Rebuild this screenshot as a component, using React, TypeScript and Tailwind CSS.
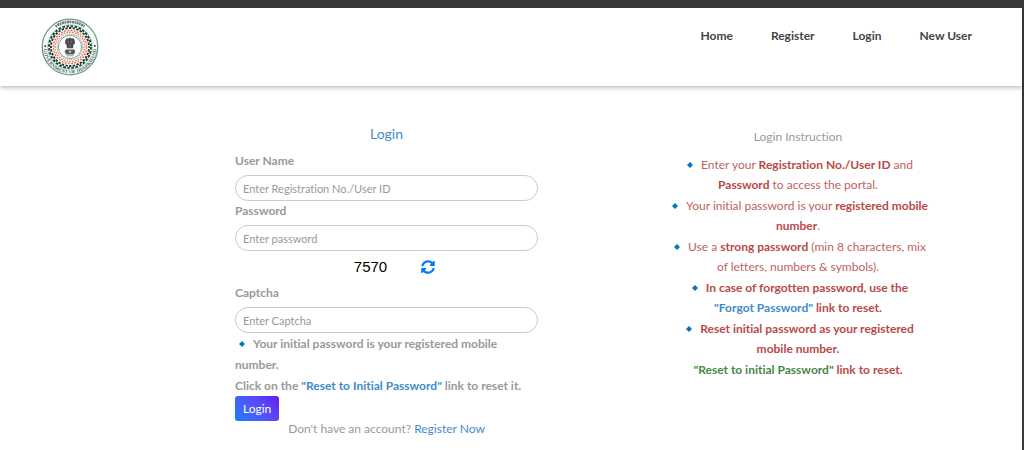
import React, { useState } from 'react';
import { FaSyncAlt } from 'react-icons/fa';

const NAV_LINKS = ['Home', 'Register', 'Login', 'New User'];

const Seal: React.FC = () => (
  <svg viewBox="0 0 58 58" className="w-[58px] h-[58px]" role="img" aria-label="Government of Jharkhand">
    <defs>
      <path id="sealBottom" d="M2.4 29 A26.6 26.6 0 0 0 55.6 29" />
    </defs>
    <circle cx="29" cy="29" r="27.8" fill="#f6faf8" stroke="#6c9a8b" strokeWidth="1.3" />
    <circle cx="29" cy="29" r="22.2" fill="#fff" stroke="#7ba697" strokeWidth="0.7" />
    {/* woven rings */}
    <circle cx="29" cy="29" r="20.9" fill="none" stroke="#1d4435" strokeWidth="1.9" strokeDasharray="2.6 1.5" />
    <circle cx="29" cy="29" r="19" fill="none" stroke="#1d3a2f" strokeWidth="1.9" strokeDasharray="2.4 1.33" strokeDashoffset="1.6" />
    <circle cx="29" cy="29" r="16.6" fill="none" stroke="#e2745c" strokeWidth="1.5" strokeDasharray="2 1.26" />
    <circle cx="29" cy="29" r="14.8" fill="none" stroke="#e58a72" strokeWidth="1.5" strokeDasharray="1.8 1.1" strokeDashoffset="1.2" />
    <circle cx="29" cy="29" r="12.9" fill="none" stroke="#b9a39c" strokeWidth="1.1" strokeDasharray="1.4 0.8" />
    <circle cx="29" cy="29" r="11.6" fill="#fff" stroke="#6c9a8b" strokeWidth="0.9" />
    {/* lion capital */}
    <path d="M24.4 22 L25.8 20.2 L27.4 20.6 L29 19.6 L30.6 20.6 L32.2 20.2 L33.6 22 L34 25.4 L32.6 26.6 L32 30.2 H26 L25.4 26.6 L24 25.4 Z" fill="#4a4a50" />
    <path d="M27.4 22.6 V25 M30.6 22.6 V25 M29 26 V29.6" stroke="#8d8d92" strokeWidth="0.6" />
    <path d="M24.6 31.4 H33.4 L34.2 33.4 L33 36.4 H25 L23.8 33.4 Z" fill="#5a5a60" />
    <circle cx="29" cy="33.8" r="1.2" fill="#b9b9bc" />
    <path d="M25.4 37.8 H32.6" stroke="#8a8a8e" strokeWidth="0.9" />
    <path d="M14.6 8.4 A25.2 25.2 0 0 1 43.4 8.4" fill="none" stroke="#6c7c75" strokeWidth="2.6" strokeDasharray="1.6 0.6 2.2 0.5" />
    <circle cx="4.2" cy="28" r="1" fill="#294c40" />
    <circle cx="53.8" cy="28" r="1" fill="#294c40" />
    <text fill="#4d6a60" className="font-['Liberation_Serif'] text-[5px] font-bold">
      <textPath href="#sealBottom" startOffset="50%" textAnchor="middle">GOVERNMENT OF JHARKHAND</textPath>
    </text>
  </svg>
);

const Bullet: React.FC = () => (
  <svg viewBox="0 0 6 6" className="inline w-[6px] h-[6px] ml-1 mr-2 align-[1px]" aria-hidden="true">
    <path d="M3 0 L6 3 L3 6 L0 3 Z" fill="#0277bd" />
  </svg>
);

interface FieldProps {
  id: string;
  label: string;
  placeholder: string;
  type?: string;
}

const Field: React.FC<FieldProps> = ({ id, label, placeholder, type = 'text' }) => {
  const [value, setValue] = useState('');

  return (
    <div className="flex flex-col">
      <label htmlFor={id} className="mb-1 leading-5 font-bold">{label}</label>
      <input
        id={id}
        type={type}
        value={value}
        placeholder={placeholder}
        onChange={(e) => setValue(e.target.value)}
        className="w-full h-[26px] px-[7px] bg-white border border-[#ccc] rounded-full outline-none text-[11px] text-[#555] placeholder:text-[#999]"
      />
    </div>
  );
};

const App: React.FC = () => {
  const [captcha, setCaptcha] = useState(7570);

  return (
    <div className="min-h-screen bg-white border-t-8 border-r-2 border-[#383838] font-[Lato,sans-serif] text-xs text-[#999] [font-variant-ligatures:none]">
      <header className="flex items-start justify-between pl-[41px] pr-[50px] py-[10px] shadow-[0_2px_4px_rgba(0,0,0,0.25)]">
        <a href="#"><Seal /></a>
        <nav className="flex gap-[38px] pt-2 leading-5 font-bold text-[#444]">
          {NAV_LINKS.map((link) => (
            <a key={link} href="#">{link}</a>
          ))}
        </nav>
      </header>

      <main className="grid grid-cols-[235fr_303fr_130fr_260fr_94fr] pt-[38px]">
        <form className="col-start-2" onSubmit={(e) => e.preventDefault()}>
          <h1 className="mb-[7px] text-center text-sm leading-5 text-[#428bca]">Login</h1>
          <Field id="username" label="User Name" placeholder="Enter Registration No./User ID" />
          <Field id="password" label="Password" placeholder="Enter password" type="password" />
          <div className="flex items-center justify-center gap-[34px] h-8 pl-4">
            <span className="font-['Liberation_Sans',sans-serif] text-[15px] text-black">{captcha}</span>
            <button
              type="button"
              aria-label="Refresh captcha"
              onClick={() => setCaptcha(Math.floor(1000 + Math.random() * 9000))}
              className="text-sm text-[#007bff]"
            >
              <FaSyncAlt />
            </button>
          </div>
          <Field id="captcha" label="Captcha" placeholder="Enter Captcha" />
          <p className="leading-[21px] font-bold">
            <Bullet />Your initial password is your registered mobile<br />number.
          </p>
          <p className="leading-[21px] font-bold">
            Click on the <a href="#" className="text-[#428bca]">"Reset to Initial Password"</a> link to reset it.
          </p>
          <button type="submit" className="block h-[25px] px-2 rounded-[3px] bg-linear-45 from-[#007bff] to-[#6610f2] text-white">
            Login
          </button>
          <p className="text-center leading-4">
            Don't have an account? <a href="#" className="text-[#428bca]">Register Now</a>
          </p>
        </form>

        <section className="col-start-4 text-center">
          <h2 className="pt-[3px] mb-2 leading-5">Login Instruction</h2>
          <ul className="flex flex-col gap-px leading-5 text-[#c0625f] [&_b]:text-[#b94a48]">
            <li><Bullet />Enter your <b>Registration No./User ID</b> and<br /><b>Password</b> to access the portal.</li>
            <li><Bullet />Your initial password is your <b>registered mobile<br />number</b>.</li>
            <li><Bullet />Use a <b>strong password</b> (min 8 characters, mix<br />of letters, numbers &amp; symbols).</li>
            <li><Bullet /><b>In case of forgotten password, use the<br /><a href="#" className="text-[#428bca]">"Forgot Password"</a> link to reset.</b></li>
            <li><Bullet /><b>Reset initial password as your registered<br />mobile number.</b></li>
            <li><b><a href="#" className="text-[#468847]">"Reset to initial Password"</a> link to reset.</b></li>
          </ul>
        </section>
      </main>
    </div>
  );
};

export default App;
